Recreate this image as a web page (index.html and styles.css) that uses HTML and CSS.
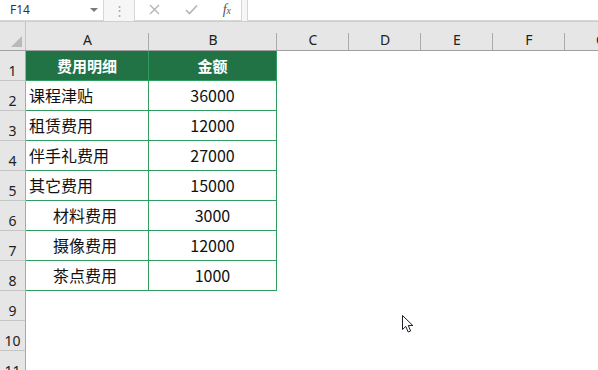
FILE: index.html
```html
<!DOCTYPE html>
<html lang="zh-CN">
<head>
    <meta charset="UTF-8">
    <title>费用明细</title>
    <link rel="stylesheet" href="styles.css">
</head>
<body>
<div class="toolbar">
    <div class="namebox">
        <span class="ref">F14</span>
        <span class="drop"></span>
    </div>
    <div class="grip">⋮</div>
    <div class="fxbox">
        <svg class="btn" width="11" height="11" viewBox="0 0 11 11">
            <path d="M1 1 L10 10 M10 1 L1 10" stroke="#b4b4b4" stroke-width="1.4"/>
        </svg>
        <svg class="btn" width="13" height="11" viewBox="0 0 13 11">
            <path d="M1 6 L4.5 9.5 L12 1.5" fill="none" stroke="#b4b4b4" stroke-width="1.6"/>
        </svg>
        <span class="fx"><i>f</i><i class="x">x</i></span>
    </div>
    <div class="formula"></div>
</div>

<div class="colhead">
    <div class="corner"><span class="tri"></span></div>
    <div class="ch a">A</div>
    <div class="ch b">B</div>
    <div class="ch">C</div>
    <div class="ch">D</div>
    <div class="ch">E</div>
    <div class="ch">F</div>
    <div class="ch">G</div>
</div>

<div class="sheet">
    <div class="row head">
        <div class="rh">1</div>
        <div class="cell a">费用明细</div>
        <div class="cell b">金额</div>
    </div>
    <div class="row">
        <div class="rh">2</div>
        <div class="cell a">课程津贴</div>
        <div class="cell b">36000</div>
    </div>
    <div class="row">
        <div class="rh">3</div>
        <div class="cell a">租赁费用</div>
        <div class="cell b">12000</div>
    </div>
    <div class="row">
        <div class="rh">4</div>
        <div class="cell a">伴手礼费用</div>
        <div class="cell b">27000</div>
    </div>
    <div class="row">
        <div class="rh">5</div>
        <div class="cell a">其它费用</div>
        <div class="cell b">15000</div>
    </div>
    <div class="row">
        <div class="rh">6</div>
        <div class="cell a sub">材料费用</div>
        <div class="cell b">3000</div>
    </div>
    <div class="row">
        <div class="rh">7</div>
        <div class="cell a sub">摄像费用</div>
        <div class="cell b">12000</div>
    </div>
    <div class="row">
        <div class="rh">8</div>
        <div class="cell a sub">茶点费用</div>
        <div class="cell b">1000</div>
    </div>
    <div class="row empty"><div class="rh">9</div></div>
    <div class="row empty"><div class="rh">10</div></div>
    <div class="row empty"><div class="rh">11</div></div>

    <svg class="cursor" width="14" height="20" viewBox="0 0 14 20">
        <path d="M1.5 1.5 L1.5 15.5 L4.8 12.4 L7.2 18 L9.6 17 L7.3 11.5 L11.8 11.5 Z"
              fill="#fff" stroke="#1c1c2a" stroke-width="1" stroke-linejoin="miter"/>
    </svg>
</div>
</body>
</html>
```

FILE: styles.css
```css
* {
    box-sizing: border-box;
}

body {
    margin: 0;
    width: 598px;
    height: 370px;
    overflow: hidden;
    background: #fff;
    font-family: "Noto Sans CJK SC", "Noto Sans", sans-serif;
    color: #111;
}

/* formula bar */
.toolbar {
    display: flex;
    height: 21px;
    background: #f6f6f6;
}

.namebox {
    width: 104px;
    display: flex;
    align-items: center;
    justify-content: space-between;
    padding: 0 5px 1px 10px;
    background: #fff;
    border-right: 1px solid #d6d6d6;
    border-bottom: 1px solid #d6d6d6;
}

.ref {
    font-size: 12px;
    color: #333;
    font-family: "Noto Sans", sans-serif;
}

.drop {
    width: 0;
    height: 0;
    border-left: 4px solid transparent;
    border-right: 4px solid transparent;
    border-top: 4px solid #7a7a7a;
}

.grip {
    width: 30px;
    text-align: center;
    font-size: 13px;
    line-height: 19px;
    color: #a8a8a8;
}

.fxbox {
    width: 108px;
    display: flex;
    align-items: center;
    justify-content: space-between;
    padding: 0 10px 1px 14px;
    background: #fff;
    border: 1px solid #d6d6d6;
    border-top: none;
}

.fx {
    font-family: "Liberation Serif", serif;
    font-size: 14px;
    color: #555;
}

.fx .x {
    font-size: 10px;
}

.formula {
    flex: 1;
    margin-left: 5px;
    background: #fff;
    border-left: 1px solid #d6d6d6;
    border-bottom: 1px solid #d6d6d6;
}

/* column header */
.colhead {
    display: flex;
    height: 30px;
    background: #e6e6e6;
    border-top: 1px solid #cfcfcf;
    border-bottom: 1px solid #a0a0a0;
}

.corner {
    flex: none;
    width: 26px;
    display: flex;
    align-items: flex-end;
    justify-content: flex-end;
    padding: 0 3px 3px 0;
    border-right: 1px solid #c4c4c4;
}

.tri {
    width: 11px;
    height: 11px;
    background: #b9b9b9;
    clip-path: polygon(100% 0, 100% 100%, 0 100%);
}

.ch {
    flex: none;
    width: 72px;
    text-align: center;
    font-size: 14px;
    line-height: 14px;
    padding-top: 11px;
    color: #222;
    font-family: "Noto Sans", sans-serif;
    background: linear-gradient(#ababab, #ababab) no-repeat right bottom / 1px 17px;
}

.ch.a {
    width: 123px;
}

.ch.b {
    width: 128px;
}

/* grid body */
.sheet {
    position: relative;
}

.row {
    display: flex;
    height: 30px;
}

.rh {
    flex: none;
    width: 26px;
    display: flex;
    align-items: flex-end;
    justify-content: center;
    padding-bottom: 1px;
    font-size: 14px;
    line-height: 16px;
    color: #222;
    font-family: "Noto Sans", sans-serif;
    background: #e6e6e6;
    border-right: 1px solid #a8a8a8;
    border-bottom: 1px solid #c4c4c4;
}

.cell {
    flex: none;
    display: flex;
    align-items: center;
    font-size: 16px;
    border-right: 1px solid #2e9d5f;
    border-bottom: 1px solid #2e9d5f;
}

.cell.a {
    width: 123px;
    padding: 0 0 2px 3px;
}

.cell.a.sub {
    padding-left: 27px;
}

.cell.b {
    width: 128px;
    justify-content: center;
    padding-bottom: 2px;
}

.head .cell {
    justify-content: center;
    padding: 0 0 1px;
    font-size: 15px;
    font-weight: bold;
    color: #fff;
    background: #217346;
}

.cursor {
    position: absolute;
    left: 401px;
    top: 263px;
}
```
